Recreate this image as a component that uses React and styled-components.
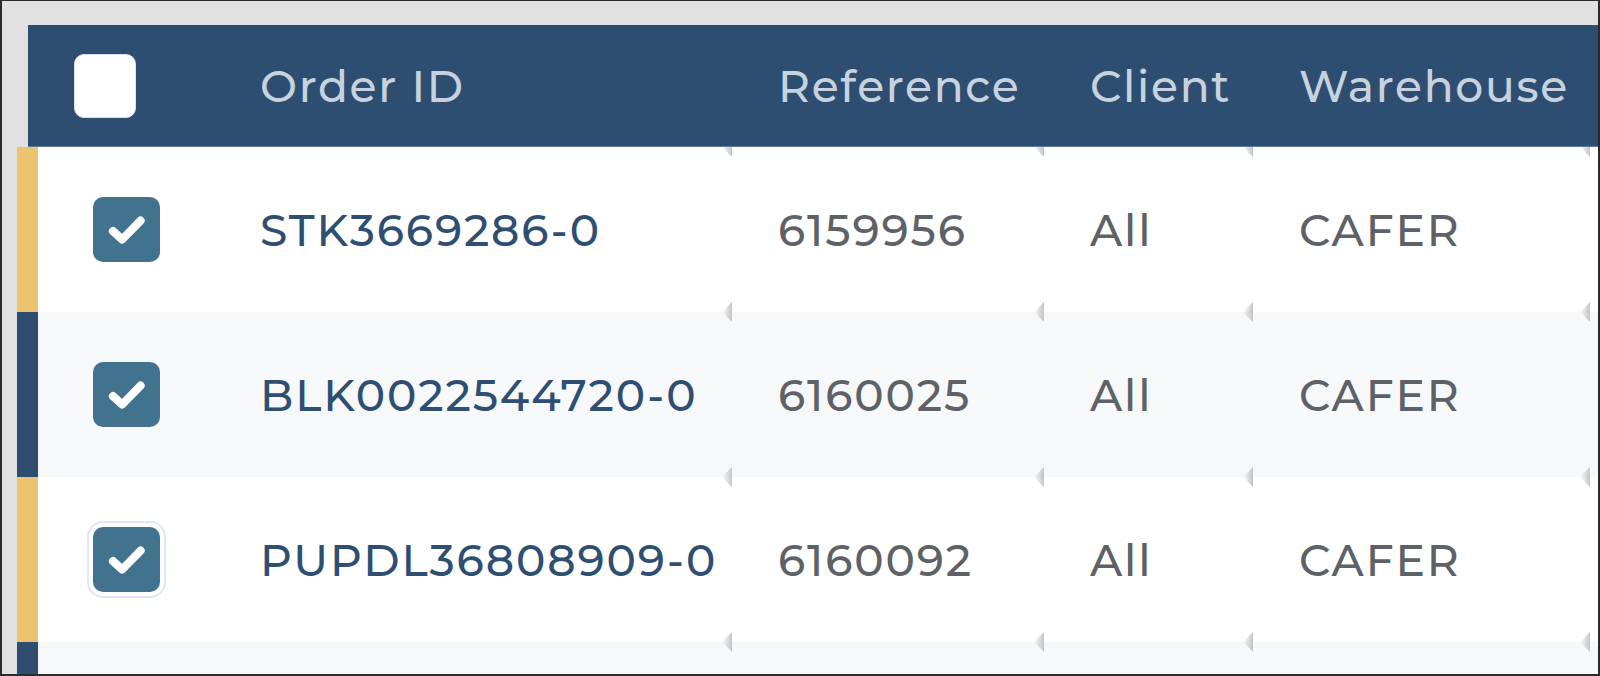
import React from "react";
import styled, { createGlobalStyle } from "styled-components";

const GlobalStyle = createGlobalStyle`
  html, body {
    margin: 0;
    padding: 0;
    background: #2b2b2b;
  }
  * { box-sizing: border-box; }
`;

const COLS = ["518px", "312px", "209px", "337px", "400px"];

const Frame = styled.div`
  width: 1600px;
  height: 676px;
  border: 2px solid #2b2b2b;
  border-top-width: 1px;
  background: #e1e1e1;
  overflow: hidden;
  padding: 24px 0 0 15px;
  font-family: "Montserrat", "Inter", "DejaVu Sans", sans-serif;
`;

const Table = styled.div`
  width: 1800px;
  display: flex;
  flex-direction: column;
`;

const HeaderRow = styled.div`
  position: relative;
  z-index: 2;
  margin-left: 11px;
  height: 122px;
  display: grid;
  grid-template-columns: 186px ${COLS.join(" ")};
  align-items: center;
  background: #2d4e70;
  border-bottom: 1px solid #5d7c9b;
`;

const HeadCell = styled.div`
  padding-left: 46px;
  color: #c7d2df;
  font-size: 44px;
  font-weight: 500;
  letter-spacing: 1.7px;
  white-space: nowrap;
`;

const Row = styled.div`
  height: 165px;
  display: grid;
  grid-template-columns: 176px ${COLS.join(" ")};
  background: #f7f8fa;
  border-left: 21px solid ${({ accent }) => accent};
`;

const Cell = styled.div`
  position: relative;
  display: flex;
  align-items: center;
  padding-left: ${({ first }) => (first ? "55px" : "46px")};
  background: ${({ bg }) => bg};
  border-radius: ${({ notch }) => (notch ? "0 9px 9px 0" : "0")};
  font-size: 44px;
  font-weight: 500;
  letter-spacing: 1.9px;
  white-space: nowrap;
  color: ${({ strong }) => (strong ? "#2e4f72" : "#5e6267")};

  ${({ notch }) =>
    notch &&
    `
    &::before {
      content: "";
      position: absolute;
      left: -10px;
      top: -10px;
      width: 10px;
      height: 20px;
      clip-path: polygon(100% 0, 0 50%, 100% 100%);
      background: linear-gradient(to right, rgba(200,200,200,0), rgba(190,190,190,0.9));
    }
  `}
`;

const HeadBox = styled.div`
  width: 62px;
  height: 64px;
  border-radius: 10px;
  background: #ffffff;
  border: 1px solid #dbe3ec;
`;

const CheckBox = styled.div`
  width: 67px;
  height: 65px;
  border-radius: 10px;
  background: #41738f;
  display: flex;
  align-items: center;
  justify-content: center;
  box-shadow: ${({ focused }) =>
    focused ? "0 0 0 4px #ffffff, 0 0 0 6px #dfe6fa" : "none"};
`;

const Check = () => (
  <svg width="67" height="65" viewBox="0 0 24 24" fill="none">
    <path
      d="M7 12.6l3.4 3.1 6.8-7"
      stroke="#ffffff"
      strokeWidth="3"
      strokeLinecap="round"
      strokeLinejoin="round"
    />
  </svg>
);

const rows = [
  { id: "STK3669286-0", ref: "6159956", client: "All", wh: "CAFER", accent: "#ecc46f", bg: "#ffffff", checked: true },
  { id: "BLK0022544720-0", ref: "6160025", client: "All", wh: "CAFER", accent: "#2d4e70", bg: "#f7f8fa", checked: true },
  { id: "PUPDL36808909-0", ref: "6160092", client: "All", wh: "CAFER", accent: "#ecc46f", bg: "#ffffff", checked: true, focused: true },
  { id: "", ref: "", client: "", wh: "", accent: "#2d4e70", bg: "#f7f8fa" },
];

export default function App() {
  return (
    <>
      <GlobalStyle />
      <Frame>
        <Table>
          <HeaderRow>
            <HeadCell>
              <HeadBox />
            </HeadCell>
            <HeadCell>Order ID</HeadCell>
            <HeadCell>Reference</HeadCell>
            <HeadCell>Client</HeadCell>
            <HeadCell>Warehouse</HeadCell>
            <HeadCell />
          </HeaderRow>
          {rows.map((r, i) => (
            <Row key={i} accent={r.accent}>
              <Cell first bg={r.bg}>
                {r.checked && (
                  <CheckBox focused={r.focused}>
                    <Check />
                  </CheckBox>
                )}
              </Cell>
              <Cell bg={r.bg} strong>{r.id}</Cell>
              <Cell bg={r.bg} notch>{r.ref}</Cell>
              <Cell bg={r.bg} notch>{r.client}</Cell>
              <Cell bg={r.bg} notch>{r.wh}</Cell>
              <Cell bg={r.bg} notch />
            </Row>
          ))}
        </Table>
      </Frame>
    </>
  );
}
